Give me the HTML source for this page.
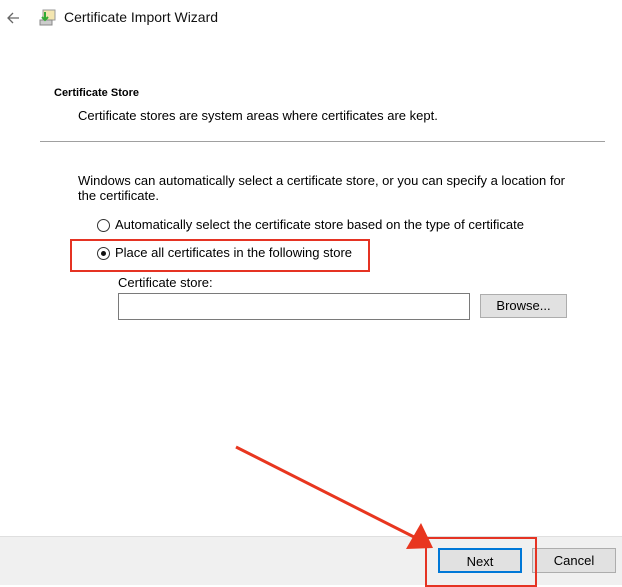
<!DOCTYPE html>
<html><head><style>
body{margin:0;width:622px;height:584px;background:#fff;font-family:"Liberation Sans",sans-serif;color:#000;position:relative;overflow:hidden;font-size:13px}
.a{position:absolute;white-space:nowrap}
.btn{position:absolute;background:#e1e1e1;border:1px solid #adadad;box-sizing:border-box;text-align:center;font-size:13px}
.radio{position:absolute;width:13px;height:13px;border:1px solid #333;border-radius:50%;box-sizing:border-box;background:#fff}
</style></head><body>
<svg class="a" style="left:5px;top:10px" width="16" height="16"><path d="M14 8H3M8 3L3 8l5 5" stroke="#666" stroke-width="1.3" fill="none"/></svg>
<svg class="a" style="left:38px;top:8px" width="20" height="20"><rect x="5" y="2" width="12" height="10" fill="#f4e6b0" stroke="#999"/><rect x="2" y="12" width="12" height="5" fill="#ccc" stroke="#888"/><path d="M7 4v8M4 9l3 3 3-3" stroke="#3a3" stroke-width="2" fill="none"/></svg>
<div class="a" style="left:64px;top:9px;font-size:14px;color:#111">Certificate Import Wizard</div>
<div class="a" style="left:54px;top:87px;font-size:11px;font-weight:bold">Certificate Store</div>
<div class="a" style="left:78px;top:108px">Certificate stores are system areas where certificates are kept.</div>
<div class="a" style="left:40px;top:141px;width:565px;height:1px;background:#a0a0a0"></div>
<div class="a" style="left:78px;top:173px;line-height:15px">Windows can automatically select a certificate store, or you can specify a location for<br>the certificate.</div>
<div class="radio" style="left:97px;top:219px"></div>
<div class="a" style="left:115px;top:217px">Automatically select the certificate store based on the type of certificate</div>
<div class="radio" style="left:97px;top:247px"><div style="position:absolute;left:3px;top:3px;width:5px;height:5px;border-radius:50%;background:#111"></div></div>
<div class="a" style="left:115px;top:245px">Place all certificates in the following store</div>
<div class="a" style="left:70px;top:239px;width:300px;height:33px;border:2px solid #e53323;box-sizing:border-box"></div>
<div class="a" style="left:118px;top:275px">Certificate store:</div>
<div class="a" style="left:118px;top:293px;width:352px;height:27px;border:1px solid #7a7a7a;box-sizing:border-box"></div>
<div class="btn" style="left:480px;top:294px;width:87px;height:24px;line-height:22px">Browse...</div>
<div class="a" style="left:0;top:536px;width:622px;height:48px;background:#f0f0f0;border-top:1px solid #dfdfdf"></div>
<div class="btn" style="left:438px;top:548px;width:84px;height:25px;line-height:23px;border:2px solid #0078d7">Next</div>
<div class="btn" style="left:532px;top:548px;width:84px;height:25px;line-height:23px">Cancel</div>
<div class="a" style="left:425px;top:537px;width:112px;height:50px;border:2px solid #e53323;box-sizing:border-box"></div>
<svg class="a" style="left:0;top:0" width="622" height="584"><line x1="236" y1="447" x2="418" y2="539" stroke="#e8361f" stroke-width="3"/><polygon points="433,548 406,549 421,523" fill="#e8361f"/></svg>
</body></html>
